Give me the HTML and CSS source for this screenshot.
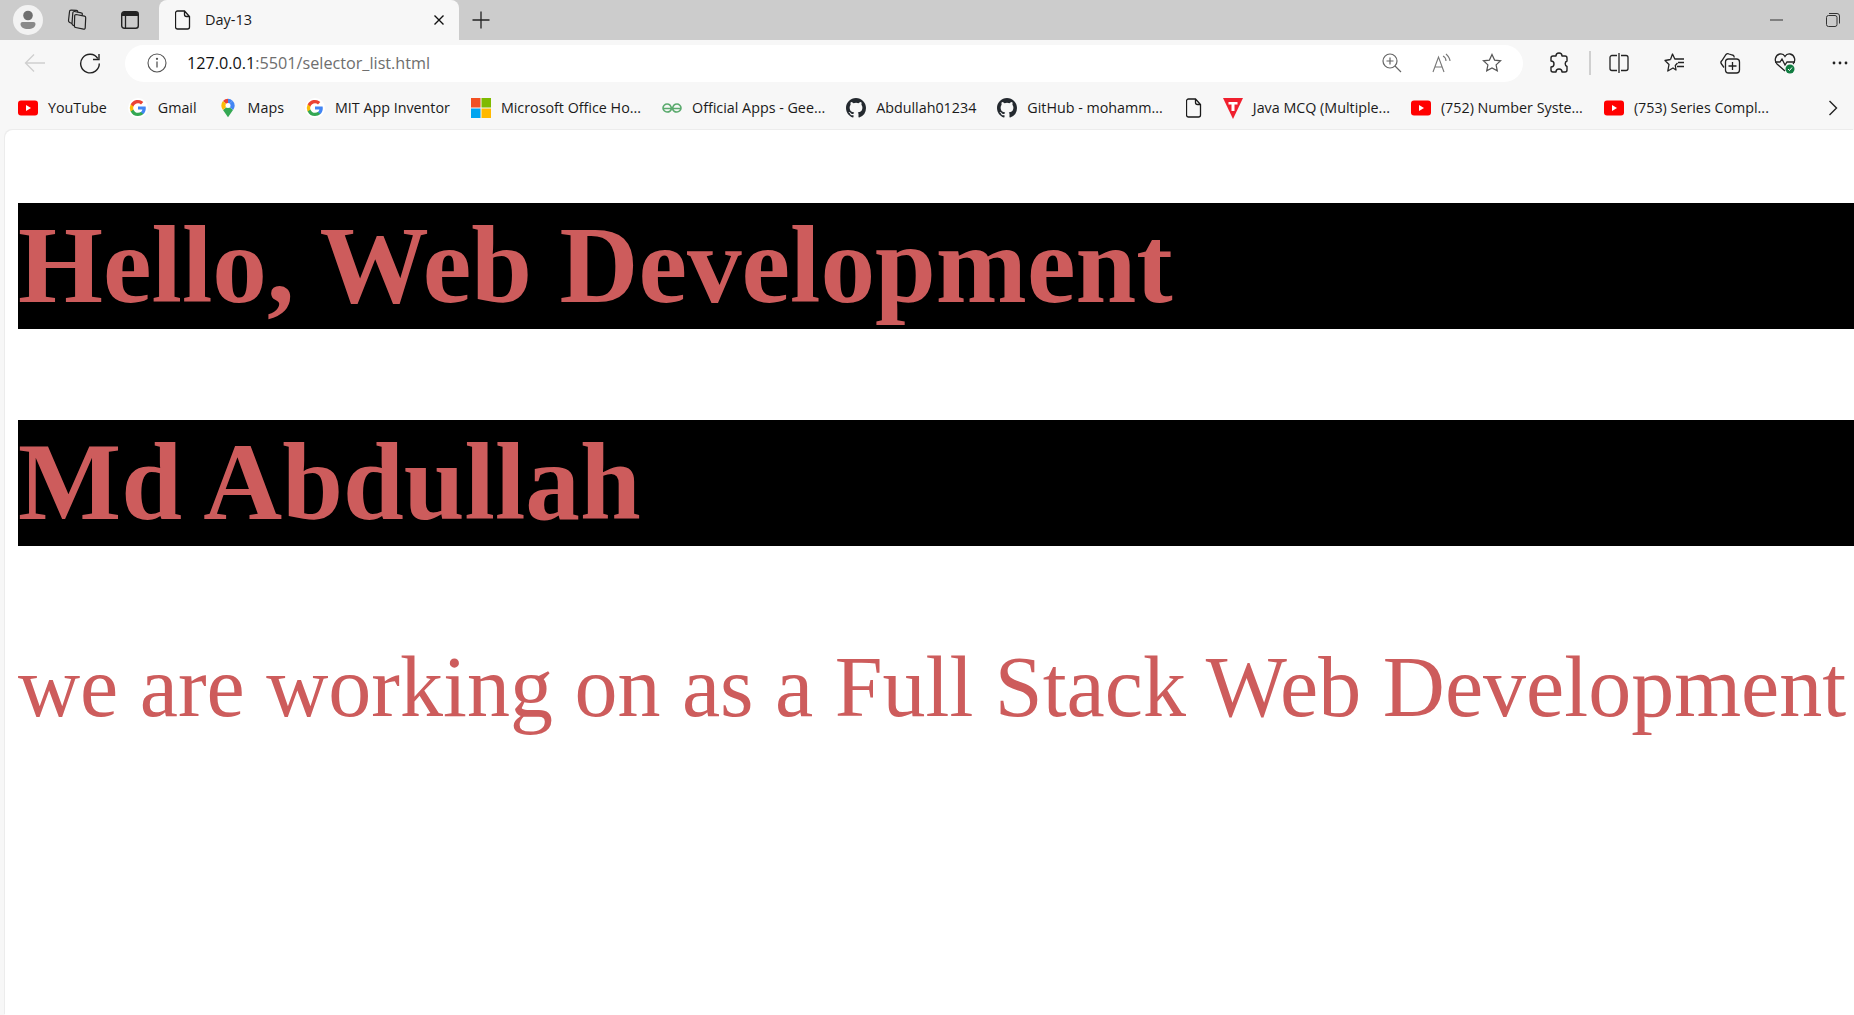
FILE: index.html
```html
<!DOCTYPE html>
<html lang="en">
<head>
    <meta charset="UTF-8">
    <title>Day-13</title>
    <link rel="stylesheet" href="styles.css">
</head>
<body>
    <svg class="sprite" width="0" height="0">
        <symbol id="i-yt" viewBox="0 0 20 16"><rect width="20" height="15" y="0.5" rx="3" fill="#f00"/><path d="M8 5l5 3-5 3z" fill="#fff"/></symbol>
        <symbol id="i-g" viewBox="0 0 20 20">
            <circle cx="10" cy="10" r="10" fill="#fff"/>
            <path d="M17.800 10.200c0-.6-.1-1.100-.2-1.700H10v3h4.400a3.700 3.700 0 0 1-1.600 2.500v2h2.600c1.500-1.400 2.400-3.400 2.400-5.800z" fill="#4285f4"/>
            <path d="M10 18c2.200 0 4-.7 5.400-2l-2.600-2c-.7.500-1.700.800-2.800.800-2.100 0-3.900-1.400-4.600-3.400H2.700v2.100A8 8 0 0 0 10 18z" fill="#34a853"/>
            <path d="M5.400 11.400a4.800 4.800 0 0 1 0-3V6.300H2.700a8 8 0 0 0 0 7.200z" fill="#fbbc05"/>
            <path d="M10 5.200c1.200 0 2.200.4 3 1.200l2.300-2.300A8 8 0 0 0 2.700 6.300l2.700 2.100C6.100 6.500 7.900 5.200 10 5.200z" fill="#ea4335"/>
        </symbol>
        <symbol id="i-gh" viewBox="0 0 16 16"><path fill="#24292f" d="M8 0C3.580 0 0 3.580 0 8c0 3.540 2.290 6.530 5.470 7.590.4.070.55-.17.55-.38 0-.19-.01-.82-.01-1.490-2.010.37-2.530-.49-2.690-.94-.09-.23-.48-.94-.82-1.130-.28-.15-.68-.52-.01-.53.630-.01 1.080.58 1.230.82.720 1.210 1.870.87 2.330.66.070-.52.280-.87.510-1.070-1.780-.2-3.640-.89-3.640-3.950 0-.87.310-1.590.820-2.150-.08-.2-.36-1.020.080-2.120 0 0 .67-.21 2.200.82a7.500 7.500 0 0 1 4 0c1.530-1.040 2.200-.82 2.200-.82.440 1.100.160 1.920.080 2.120.51.560.820 1.270.820 2.150 0 3.070-1.870 3.750-3.650 3.950.290.250.540.730.540 1.480 0 1.070-.01 1.930-.01 2.200 0 .210.150.460.550.380A8.010 8.010 0 0 0 16 8c0-4.420-3.580-8-8-8z"/></symbol>
        <symbol id="i-doc" viewBox="0 0 16 20"><path d="M2.500 1h7l5 5.500V17a2 2 0 0 1-2 2h-10a2 2 0 0 1-2-2V3a2 2 0 0 1 2-2zM9.500 1v3.500a2 2 0 0 0 2 2h3" fill="none" stroke="#1a1a1a" stroke-width="1.300"/></symbol>
    </svg>

    <div class="tabstrip">
        <button class="avatar">
            <svg width="30" height="30" viewBox="0 0 30 30"><circle cx="15" cy="15" r="15" fill="#f2f2f2"/><circle cx="15" cy="10.500" r="4.800" fill="#6f6f6f"/><path d="M7.500 19a2 2 0 0 1 2-2h11a2 2 0 0 1 2 2c0 3-3 5-7.500 5s-7.500-2-7.500-5z" fill="#8a8a8a"/></svg>
        </button>
        <button class="btn btn-collections">
            <svg width="22" height="22" viewBox="0 0 22 22" fill="none" stroke="#222" stroke-width="1.200" stroke-linejoin="round"><path d="M10 5.500l8.500 1.700a1.500 1.500 0 0 1 1.200 1.500l-.5 10.300a1.300 1.300 0 0 1-1.600 1.200l-8-1.700a1.500 1.500 0 0 1-1.200-1.500l.3-10.200a1.300 1.300 0 0 1 1.300-1.300z"/><path d="M16 6.500l.3-1.200a1.200 1.200 0 0 0-1-1.500L8.500 2.500A1.500 1.500 0 0 0 6.800 4L6 14.500a2 2 0 0 0 1.300 1.900l1 .3"/><path d="M11.500 3.200l.2-.6A1.200 1.200 0 0 0 10.500 1.300L5 1.200A1.500 1.500 0 0 0 3.500 2.700L2.500 11.500a2 2 0 0 0 1.200 2l2.300 1"/></svg>
        </button>
        <button class="btn btn-vtabs">
            <svg width="20" height="20" viewBox="0 0 20 20"><rect x="1.700" y="1.700" width="16.600" height="16.600" rx="2.500" fill="none" stroke="#222" stroke-width="1.400"/><path d="M2 4a2 2 0 0 1 2-2h12a2 2 0 0 1 2 2v2H2z" fill="#222"/><path d="M5.500 6v12" stroke="#222" stroke-width="1.300"/></svg>
        </button>
        <div class="tab">
            <svg class="tab-icon" width="16" height="20"><use href="#i-doc"/></svg>
            <span class="tab-title">Day-13</span>
            <svg class="tab-close" width="12" height="12" viewBox="0 0 12 12"><path d="M1.500 1.500l9 9M10.500 1.500l-9 9" stroke="#111" stroke-width="1.400"/></svg>
        </div>
        <button class="btn btn-new">
            <svg width="18" height="18" viewBox="0 0 18 18"><path d="M9 0.500v17M0.500 9h17" stroke="#222" stroke-width="1.300"/></svg>
        </button>
        <div class="window-controls">
            <button class="btn"><svg width="13" height="2" viewBox="0 0 13 2"><path d="M0 1h13" stroke="#333" stroke-width="1"/></svg></button>
            <button class="btn"><svg width="14" height="14" viewBox="0 0 14 14" fill="none" stroke="#333"><rect x="0.500" y="2.500" width="10.500" height="11" rx="2"/><path d="M3 .5h8a2.500 2.500 0 0 1 2.500 2.500v7.500"/></svg></button>
        </div>
    </div>

    <div class="toolbar">
        <button class="btn">
            <svg width="22" height="20" viewBox="0 0 22 20" fill="none" stroke="#cfcfcf" stroke-width="1.300"><path d="M21 10H1.500M10 1.500L1.500 10l8.500 8.500"/></svg>
        </button>
        <button class="btn">
            <svg width="22" height="22" viewBox="0 0 22 22" fill="none" stroke="#222" stroke-width="1.400"><path d="M20 2v5.500h-6"/><path d="M18.800 6.500A9.300 9.300 0 1 0 20.300 11.500"/></svg>
        </button>
        <div class="address">
            <svg class="addr-info" width="20" height="20" viewBox="0 0 20 20" fill="none" stroke="#555" stroke-width="1.100"><circle cx="10" cy="10" r="9"/><path d="M10 8.500v6" stroke-width="1.300"/><circle cx="10" cy="5.800" r=".6" fill="#555"/></svg>
            <span class="url"><span class="url-host">127.0.0.1</span>:5501/selector_list.html</span>
            <div class="addr-actions">
                <svg width="20" height="20" viewBox="0 0 20 20" fill="none" stroke="#666" stroke-width="1.200"><circle cx="8" cy="8" r="7"/><path d="M13 13l6 6M8 4.500v7M4.500 8h7"/></svg>
                <svg width="20" height="20" viewBox="0 0 20 20" fill="none" stroke="#777" stroke-width="1.100"><path d="M1 19L6.500 4 12 19M3 14h7"/><path d="M11 3c2 1 3 3 3 5M14 1c2 2 4 4 4 7"/></svg>
                <svg width="20" height="20" viewBox="0 0 20 20" fill="none" stroke="#555" stroke-width="1.200"><path d="M10 1.500l2.600 5.600 6 .7-4.500 4.100 1.200 6L10 15l-5.300 2.900 1.200-6L1.400 7.800l6-.7z"/></svg>
            </div>
        </div>
        <button class="btn btn-ext">
            <svg width="20" height="22" viewBox="0 0 20 22" fill="none" stroke="#222" stroke-width="1.400" stroke-linejoin="round"><path d="M7 4a3 3 0 0 1 6 0h3a2 2 0 0 1 2 2v3a3 3 0 0 0 0 5.500V18a2 2 0 0 1-2 2h-3a3 3 0 0 0-6 0H4a2 2 0 0 1-2-2v-3a3 3 0 0 0 0-6V6a2 2 0 0 1 2-2z"/></svg>
        </button>
        <span class="sep"></span>
        <button class="btn btn-split">
            <svg width="20" height="20" viewBox="0 0 20 20" fill="none" stroke="#222" stroke-width="1.300"><path d="M8 2.500H3a2 2 0 0 0-2 2v11a2 2 0 0 0 2 2h5M12 2.500h5a2 2 0 0 1 2 2v11a2 2 0 0 1-2 2h-5M10 0v20"/></svg>
        </button>
        <button class="btn btn-fav">
            <svg width="22" height="22" viewBox="0 0 22 22" fill="none" stroke="#222" stroke-width="1.300" stroke-linejoin="round"><path d="M6.500 7.500L8.500 2l2.300 5H20M14 10.500h6M13 14.500h7M6.500 7.500L1 8.500l4 4L3.800 19 9 16l3 2-.7-4.500 2.200-2.500"/></svg>
        </button>
        <button class="btn">
            <svg width="22" height="22" viewBox="0 0 22 22" fill="none" stroke="#222" stroke-width="1.300"><path d="M5 15.500L2.500 12a2.500 2.500 0 0 1 .5-3.500L7 2.500a2.500 2.500 0 0 1 3-.5l3.500 1a2 2 0 0 1 1.500 2.500"/><rect x="6.500" y="7" width="14" height="14" rx="3"/><path d="M13.500 10v8M9.500 14h8"/></svg>
        </button>
        <button class="btn">
            <svg width="24" height="24" viewBox="0 0 24 24" fill="none"><path d="M12 20L4 13C1 10 2 4 7 3c2-.3 4 .7 5 2.500C13 3.700 15 2.700 17 3c5 1 6 7 3 10" stroke="#222" stroke-width="1.300"/><path d="M2 11h5l2-3 3 6 2-3h8" stroke="#222" stroke-width="1.300"/><circle cx="17" cy="18" r="4.500" fill="#107c41"/><path d="M15 18l1.500 1.500 2.500-3" stroke="#fff" stroke-width="1"/></svg>
        </button>
        <button class="btn btn-more">
            <svg width="16" height="4" viewBox="0 0 16 4" fill="#222"><circle cx="2" cy="2" r="1.400"/><circle cx="8" cy="2" r="1.400"/><circle cx="14" cy="2" r="1.400"/></svg>
        </button>
    </div>

    <div class="bookmarks">
        <a class="bookmark"><svg width="20" height="16"><use href="#i-yt"/></svg>YouTube</a>
        <a class="bookmark"><svg width="20" height="20"><use href="#i-g"/></svg>Gmail</a>
        <a class="bookmark">
            <svg width="20" height="20" viewBox="0 0 20 24"><path d="M4 14.500l6 8.500 6-8.500-6-5z" fill="#34a853"/><path d="M15.500 3.300A8 8 0 0 1 18 9c0 2-1 4-2 5.500L10 9z" fill="#4285f4"/><path d="M10 1a8 8 0 0 1 5.500 2.300L10 9z" fill="#4285f4"/><path d="M10 1a8 8 0 0 0-6 2.700L10 9z" fill="#ea4335"/><path d="M4 3.700A8 8 0 0 0 2 9c0 2 1 4 2 5.500L10 9z" fill="#fbbc05"/><circle cx="10" cy="9" r="3" fill="#fff"/></svg>Maps
        </a>
        <a class="bookmark"><svg width="20" height="20"><use href="#i-g"/></svg>MIT App Inventor</a>
        <a class="bookmark">
            <svg width="20" height="20" viewBox="0 0 20 20"><rect width="9.500" height="9.500" fill="#f25022"/><rect x="10.500" width="9.500" height="9.500" fill="#7fba00"/><rect y="10.500" width="9.500" height="9.500" fill="#00a4ef"/><rect x="10.500" y="10.500" width="9.500" height="9.500" fill="#ffb900"/></svg>Microsoft Office Ho...
        </a>
        <a class="bookmark">
            <svg width="20" height="10" viewBox="0 0 20 10" fill="none" stroke="#5aaa6d" stroke-width="1.600"><path d="M1 5.500h18M9.500 5.500C9 2.500 7 1 5 1S1 3 1 5s2 4 4 4 4-1 4.500-3.500zM10.500 5.500C11 2.500 13 1 15 1s4 2 4 4-2 4-4 4-4-1-4.500-3.500z"/></svg>Official Apps - Gee...
        </a>
        <a class="bookmark"><svg width="20" height="20"><use href="#i-gh"/></svg>Abdullah01234</a>
        <a class="bookmark"><svg width="20" height="20"><use href="#i-gh"/></svg>GitHub - mohamm...</a>
        <a class="bookmark bookmark-blank"><svg width="16" height="20"><use href="#i-doc"/></svg></a>
        <a class="bookmark">
            <svg width="20" height="22" viewBox="0 0 20 22"><path d="M0 1h20L10 22z" fill="#f01f2e"/><path d="M5.500 5h9v2.500h-3V14h-3V7.500h-3z" fill="#fff"/></svg>Java MCQ (Multiple...
        </a>
        <a class="bookmark"><svg width="20" height="16"><use href="#i-yt"/></svg>(752) Number Syste...</a>
        <a class="bookmark"><svg width="20" height="16"><use href="#i-yt"/></svg>(753) Series Compl...</a>
        <svg class="bm-more" width="10" height="16" viewBox="0 0 10 16" fill="none" stroke="#222" stroke-width="1.400"><path d="M1.500 1l7 7-7 7"/></svg>
    </div>

    <main class="page">
        <h2 class="heading">Hello, Web Development</h2>
        <h2 class="heading">Md Abdullah</h2>
        <p class="lead">we are working on as a Full Stack Web Development</p>
    </main>
</body>
</html>
```

FILE: styles.css
```css
html, body {
    margin: 0;
    height: 100%;
    overflow: hidden;
}

body {
    display: flex;
    flex-direction: column;
    background-color: #f7f7f7;
    font-family: "Open Sans", "Noto Sans", sans-serif;
    color: #1a1a1a;
}

.sprite {
    position: absolute;
}

button {
    padding: 0;
    border: none;
    background: none;
}

.btn {
    flex: none;
    display: flex;
    align-items: center;
    justify-content: center;
    width: 40px;
    height: 36px;
}

/* Tira de pestañas */
.tabstrip {
    flex: none;
    display: flex;
    align-items: center;
    height: 40px;
    background-color: #cccccc;
    padding-left: 8px;
}

.avatar {
    display: flex;
    align-items: center;
    justify-content: center;
    width: 40px;
    height: 40px;
}

.btn-collections {
    margin-left: 9px;
}

.btn-vtabs {
    margin-left: 13px;
}

.tab {
    display: flex;
    align-items: center;
    align-self: stretch;
    width: 300px;
    margin-left: 9px;
    padding-left: 16px;
    box-sizing: border-box;
    background-color: #f7f7f7;
    border-radius: 8px 8px 0 0;
}

.tab-title {
    margin: 0 0 2px 14px;
    font-size: 14.5px;
}

.tab-close {
    margin-left: auto;
    margin-right: 14px;
}

.btn-new {
    margin-left: 2px;
}

.window-controls {
    display: flex;
    gap: 17px;
    margin-left: auto;
    margin-right: 1px;
}

/* Barra de direcciones */
.toolbar {
    flex: none;
    display: flex;
    align-items: center;
    height: 47px;
    padding: 0 0 1px 15px;
    box-sizing: border-box;
    gap: 15px;
}

.address {
    flex: none;
    display: flex;
    align-items: center;
    width: 1398px;
    height: 37px;
    box-sizing: border-box;
    padding: 0 21px 0 22px;
    background-color: #fff;
    border-radius: 19px;
}

.url {
    margin-left: 20px;
    font-size: 16.2px;
    color: #6e6e6e;
}

.url-host {
    color: #111;
}

.addr-actions {
    display: flex;
    align-items: center;
    gap: 30px;
    margin-left: auto;
}

.sep {
    flex: none;
    width: 2px;
    height: 24px;
    margin: 0 -7px 0 -5px;
    background-color: #d0d0d0;
}

.btn-ext {
    margin-left: 1px;
}

.btn-fav {
    margin-left: 1px;
}

.btn-more {
    width: 28px;
    margin-left: 6px;
}

/* Marcadores */
.bookmarks {
    flex: none;
    display: flex;
    align-items: center;
    gap: 21px;
    height: 43px;
    padding: 0 0 2px 18px;
    box-sizing: border-box;
    font-size: 14.3px;
}

.bookmark {
    display: flex;
    align-items: center;
    gap: 10px;
    white-space: nowrap;
}

.bookmark-blank {
    margin-left: 2px;
}

.bm-more {
    margin-left: auto;
    margin-right: 16px;
}

/* Contenido de la página */
.page {
    flex: 1;
    margin-left: 5px;
    padding: 73px 0 0 13px;
    background-color: #fff;
    box-shadow: -1px -1px 0 #ececec;
    border-top-left-radius: 8px;
    font-family: "Liberation Serif", serif;
    color: indianred;
}

.heading {
    margin: 0 0 91px;
    background-color: #000;
    font-size: 109.3px;
    line-height: 126px;
    font-weight: bold;
}

.lead {
    margin: 0;
    font-size: 86px;
    white-space: nowrap;
}
```
